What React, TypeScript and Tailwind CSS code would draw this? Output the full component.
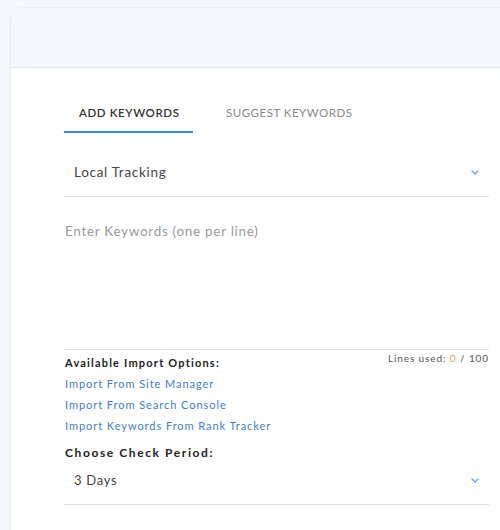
import { useState } from "react";

function Chevron() {
  return (
    <svg width="8" height="5" viewBox="0 0 8 5" fill="none" stroke="#5b9bea" strokeWidth="1.2" strokeLinecap="round" strokeLinejoin="round">
      <path d="M1 1l3 3 3-3" />
    </svg>
  );
}

const LINKS = [
  "Import From Site Manager",
  "Import From Search Console",
  "Import Keywords From Rank Tracker",
];

export default function App() {
  const [tab, setTab] = useState<"add" | "suggest">("add");
  const [text, setText] = useState("");
  const lines = text.split("\n").filter((l) => l.trim()).length;

  return (
    <div
      className="w-[500px] h-[530px] overflow-hidden bg-[#f4f7fb] pt-[7px] pl-[10px]"
      style={{ fontFamily: "Lato, 'Open Sans', sans-serif" }}
    >
      <div className="w-[520px] h-[540px] bg-white rounded-tl-[12px] border border-[#e8edf3] overflow-hidden">
        {/* header */}
        <div className="h-[60px] bg-[#f4f7fb] border-b border-[#e3e9f0]" />

        {/* body */}
        <div className="pl-[53px] w-[478px]">
          {/* tabs */}
          <div className="flex mt-[30px]">
            <button
              onClick={() => setTab("add")}
              className={
                "w-[129px] text-left pl-[15px] pt-[6px] h-[35px] flex items-start text-[11.5px] tracking-[0.6px] border-b-2 " +
                (tab === "add" ? "border-[#3b8ced] text-[#333] font-semibold" : "border-transparent text-[#888]")
              }
            >
              ADD KEYWORDS
            </button>
            <button
              onClick={() => setTab("suggest")}
              className={
                "ml-[18px] px-[15px] pt-[6px] h-[35px] flex items-start text-[11.5px] tracking-[0.5px] border-b-2 " +
                (tab === "suggest" ? "border-[#3b8ced] text-[#333] font-semibold" : "border-transparent text-[#888]")
              }
            >
              SUGGEST KEYWORDS
            </button>
          </div>

          {/* tracking select */}
          <div className="mt-[22px] h-[42px] flex items-center justify-between pl-[10px] pr-[10px] border-b border-[#e2e2e2]">
            <span className="text-[13.5px] text-[#444] tracking-[0.7px] -mt-[7px]">Local Tracking</span>
            <span className="-mt-[7px]"><Chevron /></span>
          </div>

          {/* keywords textarea */}
          <textarea
            value={text}
            onChange={(e) => setText(e.target.value)}
            placeholder="Enter Keywords (one per line)"
            className="block w-full h-[153px] pt-[24px] pl-[1px] resize-none outline-none text-[13.5px] tracking-[0.7px] text-[#444] placeholder:text-[#9a9a9a] border-b border-[#e2e2e2]"
          />

          {/* import options */}
          <div className="flex justify-between items-start">
            <div className="pl-[1px] text-[11px] font-bold text-[#222] tracking-[1.2px] mt-[5px]">
              Available Import Options:
            </div>
            <div className="text-[10px] text-[#555] tracking-[0.9px] mt-[1px]">
              Lines used: <span className="text-[#f0a030]">{lines}</span> / 100
            </div>
          </div>
          <div className="flex flex-col gap-[5px] mt-[4px] pl-[1px]">
            {LINKS.map((l) => (
              <a key={l} href="#" className="text-[11px] text-[#3b7dd8] tracking-[0.95px] leading-[16px]">
                {l}
              </a>
            ))}
          </div>

          {/* check period */}
          <div className="mt-[10px] pl-[1px] text-[12px] font-bold text-[#222] tracking-[1.6px]">
            Choose Check Period:
          </div>
          <div className="h-[43px] flex items-center justify-between pl-[10px] pr-[10px] border-b border-[#e2e2e2]">
            <span className="text-[13px] text-[#444] tracking-[0.7px] -mt-[4px]">3 Days</span>
            <span className="-mt-[4px]"><Chevron /></span>
          </div>
        </div>
      </div>
    </div>
  );
}
